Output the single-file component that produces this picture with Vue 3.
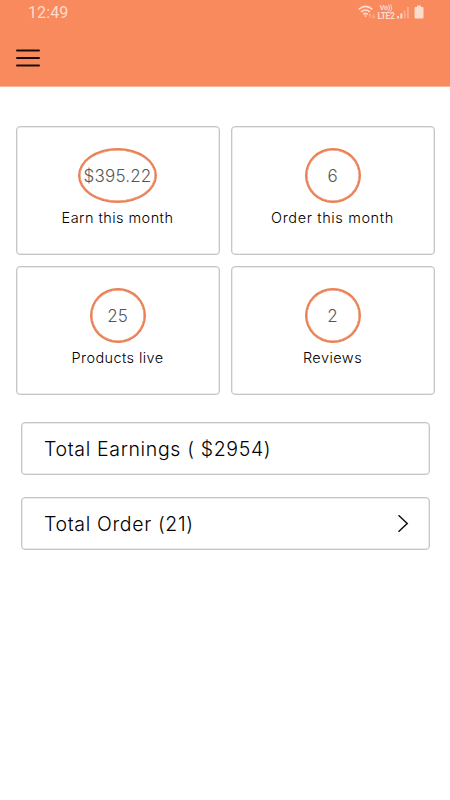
<template>
  <div class="screen">
    <header class="header">
      <div class="status-bar">
        <span class="clock">12:49</span>
        <div class="status-icons">
          <!-- wifi -->
          <svg class="wifi" width="18" height="14" viewBox="0 0 18 14" fill="none" stroke="#fddccd" stroke-width="1.6">
            <path d="M.8 4.3Q7.5-1.5 14.4 4.3M3 7Q7.5 3 12 7M5.2 9.4Q7.5 7.4 9.8 9.4" />
            <path d="M6.2 10.6L7.5 12.3L8.8 10.6Z" fill="#fddccd" stroke="none" />
            <path d="M12 13V9M10.6 10.5L12 9L13.4 10.5M15.6 9V13M14.2 11.5L15.6 13L17 11.5" stroke-width=".8" opacity=".55" />
          </svg>
          <div class="volte">
            <span class="volte-top">Vo))</span>
            <span class="volte-bottom">LTE2</span>
          </div>
          <!-- signal -->
          <svg class="signal" width="13" height="13" viewBox="0 0 13 13" fill="#fddccd">
            <rect x="0" y="10" width="2" height="2.5" />
            <rect x="3.3" y="7.5" width="2" height="5" />
            <rect x="6.6" y="4.5" width="2" height="8" opacity=".4" />
            <rect x="9.9" y="1" width="2" height="11.5" opacity=".4" />
          </svg>
          <!-- battery -->
          <svg class="battery" width="10" height="14" viewBox="0 0 10 14" fill="#fddccd">
            <path d="M3 .5H7V2H8.5Q9.5 2 9.5 3V12.5Q9.5 13.5 8.5 13.5H1.5Q.5 13.5 .5 12.5V3Q.5 2 1.5 2H3Z" />
          </svg>
        </div>
      </div>
      <button class="menu" aria-label="Menu">
        <svg width="24" height="18" viewBox="0 0 24 18" stroke="#18100d" stroke-width="2" stroke-linecap="round">
          <path d="M1 1.6H23M1 9H23M1 16.4H23" />
        </svg>
      </button>
    </header>

    <div class="stats">
      <div v-for="s in stats" :key="s.label" class="stat-card">
        <div class="circle" :class="{ wide: s.value.length > 3 }">{{ s.value }}</div>
        <div class="stat-label" :class="s.key">{{ s.label }}</div>
      </div>
    </div>

    <div class="totals">
      <div class="total-row">Total Earnings ( $2954)</div>
      <div class="total-row">
        <span>Total Order (21)</span>
        <svg width="12" height="18" viewBox="0 0 12 18" fill="none" stroke="#111" stroke-width="1.5">
          <path d="M1.5 .3L10.2 8.5L1.5 16.7" />
        </svg>
      </div>
    </div>
  </div>
</template>

<script setup>
const stats = [
  { key: 'earn', value: '$395.22', label: 'Earn this month' },
  { key: 'order', value: '6', label: 'Order this month' },
  { key: 'products', value: '25', label: 'Products live' },
  { key: 'reviews', value: '2', label: 'Reviews' }
]
</script>

<style>
body { margin: 0; background: #fff; }
</style>

<style scoped>
.screen { width: 450px; height: 800px; overflow: hidden; background: #fff; font-family: Inter, "Liberation Sans", sans-serif; color: #000; }

/* header */
.header { height: 87px; background: #f88a5e; border-bottom: 1px solid #fbb597; box-sizing: border-box; }
.status-bar { display: flex; justify-content: space-between; height: 26px; padding: 0 26px 0 28px; align-items: center; }
.clock { margin-top: -2px; font-family: Roboto, sans-serif; font-size: 16px; letter-spacing: 0.1px; color: #fddccd; }
.status-icons { display: flex; align-items: center; height: 26px; margin-top: -2px; }
.volte { display: flex; flex-direction: column; align-items: center; width: 18px; margin-left: 1px; font-family: Roboto, sans-serif; font-weight: 700; color: #fddccd; }
.volte-top { font-size: 7px; line-height: 7px; letter-spacing: -0.2px; }
.volte-bottom { font-size: 8.5px; line-height: 8px; letter-spacing: -0.4px; }
.signal { margin-left: 2px; }
.battery { margin-left: 4px; }
.menu { display: block; margin: 23px 0 0 16px; padding: 0; border: 0; background: none; height: 18px; }
.menu svg { display: block; }

/* stat cards */
.stats { display: grid; grid-template-columns: 204px 204px; gap: 11px; padding: 39px 0 0 16px; }
.stat-card { display: flex; flex-direction: column; align-items: center; height: 129px; padding: 21px 1px 0 0; box-sizing: border-box; border: 1px solid #c6c6c6; border-radius: 4px; box-shadow: inset 0 0 0 0.5px #d8d8d8; }
.circle { display: flex; align-items: center; justify-content: center; width: 56px; height: 55px; box-sizing: border-box; border: 2px solid #ea8055; box-shadow: inset 0 0 0 0.5px #ea8055; border-radius: 50%; font-size: 17px; font-weight: 300; color: #555; white-space: nowrap; }
.circle.wide { width: 79px; letter-spacing: 0.2px; }
.stat-label { margin-top: 6px; font-size: 14.5px; font-weight: 300; line-height: 18px; letter-spacing: 0.45px; white-space: nowrap; }
.stat-label.order { letter-spacing: 0.62px; }
.stat-label.products { letter-spacing: 0.4px; }

/* totals */
.totals { display: flex; flex-direction: column; gap: 22px; padding: 27px 20px 0 21px; }
.total-row { display: flex; align-items: center; justify-content: space-between; height: 53px; padding: 0 20px 0 22px; box-sizing: border-box; border: 1px solid #c6c6c6; border-radius: 4px; box-shadow: inset 0 0 0 0.5px #d8d8d8; font-size: 19.5px; font-weight: 300; letter-spacing: 0.65px; white-space: nowrap; }
</style>
